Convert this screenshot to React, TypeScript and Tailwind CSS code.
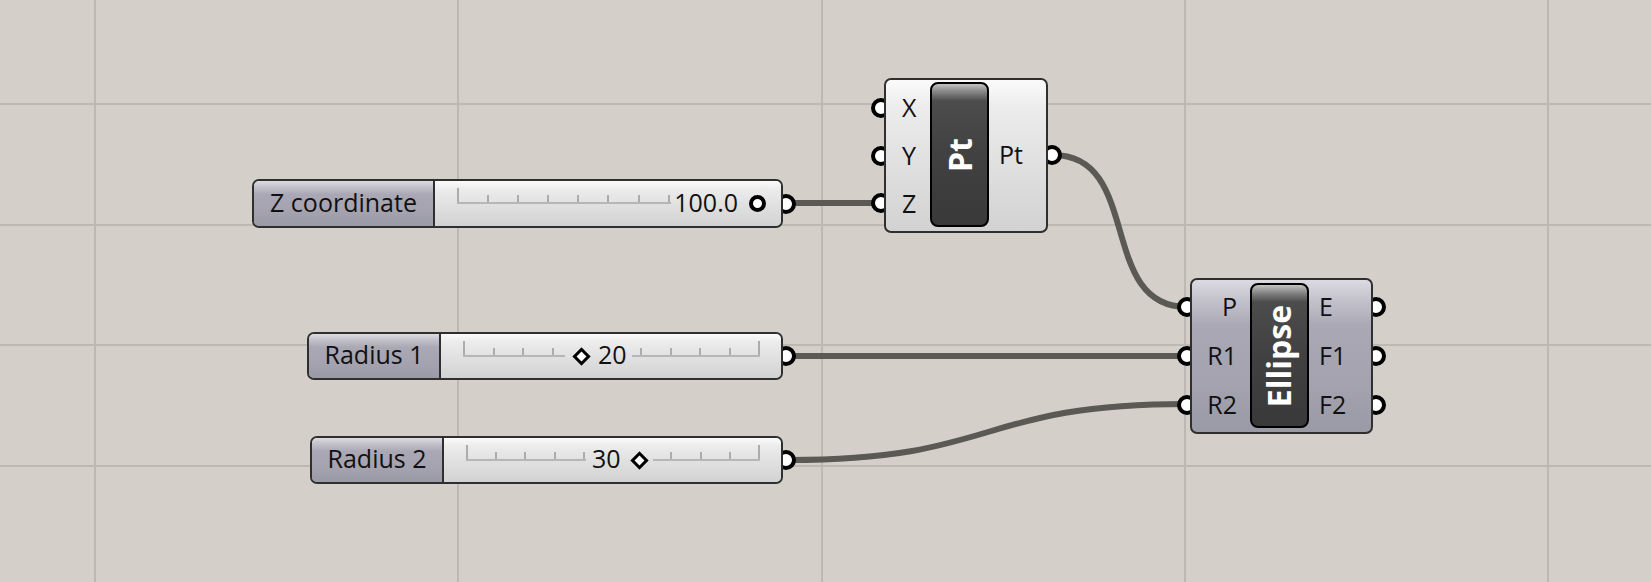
import React from 'react'

const font = "font-['Open_Sans',sans-serif]"

// lavender label / component body
const lavender =
  'bg-[linear-gradient(to_bottom,#dcdbe2_0%,#c2c1cb_14%,#a9a8b4_30%,#a3a2ae_70%,#9a99a6_100%)]'
// pale grey slider track / component body
const pale =
  'bg-[linear-gradient(to_bottom,#fbfbfb_0%,#ececec_18%,#e0e0e0_55%,#d2d2d2_100%)]'
const capsule =
  'bg-[linear-gradient(to_bottom,#c4c4c4_0%,#8a8a8a_5%,#4c4c4c_12%,#414141_50%,#393939_100%)]'

function Port({ className }: { className: string }) {
  return (
    <div
      className={`absolute w-[20px] h-[20px] rounded-full border-[4.5px] border-black bg-white ${className}`}
    />
  )
}

function Diamond() {
  return (
    <div className="w-[20px] h-[20px] flex items-center justify-center shrink-0">
      <div className="w-[13px] h-[13px] rotate-45 border-[3px] border-black bg-white" />
    </div>
  )
}

function Track() {
  const ticks = Array.from({ length: 11 })
  return (
    <div className="absolute left-[22px] right-[21px] top-[9px] h-[14px] border-b-2 border-[#b6b6b6] flex justify-between items-end">
      {ticks.map((_, i) => (
        <div
          key={i}
          className={`w-[2px] bg-[#acacac] ${i === 0 || i === 10 ? 'h-[14px]' : 'h-[7px]'}`}
        />
      ))}
    </div>
  )
}

function Slider({
  pos,
  labelW,
  label,
  children,
}: {
  pos: string
  labelW: string
  label: string
  children: React.ReactNode
}) {
  return (
    <div className={`absolute ${pos}`}>
      <Port className="right-[-13px] top-1/2 -translate-y-1/2" />
      <div className="relative flex h-full rounded-[7px] border-2 border-[#2f2f2f] overflow-hidden">
        <div
          className={`${labelW} ${lavender} border-r-2 border-[#2f2f2f] flex items-center justify-center text-[25px] text-[#111] pb-[2px]`}
        >
          {label}
        </div>
        <div className={`relative flex-1 ${pale}`}>
          <Track />
          {children}
        </div>
      </div>
    </div>
  )
}

function Capsule({ text }: { text: string }) {
  return (
    <div
      className={`w-[59px] h-full rounded-[8px] border-2 border-black ${capsule} flex items-center justify-center`}
    >
      <span className="-rotate-90 text-white font-bold text-[32px] leading-none whitespace-nowrap">
        {text}
      </span>
    </div>
  )
}

function Wires() {
  return (
    <svg className="absolute inset-0" width="1651" height="582">
      <g stroke="#5a5954" strokeWidth="6" fill="none">
        <path d="M 789 203 L 880 203" />
        <path d="M 1053 155 C 1143 155, 1097 307, 1187 307" />
        <path d="M 789 356 L 1187 356" />
        <path d="M 789 460 C 1000 460, 976 404, 1187 404" />
      </g>
    </svg>
  )
}

function Grid() {
  const xs = [95, 458, 822, 1185, 1548]
  const ys = [104, 225, 345, 466]
  return (
    <svg className="absolute inset-0" width="1651" height="582">
      <g stroke="#bdb9b2" strokeWidth="2">
        {xs.map((x) => (
          <line key={x} x1={x} y1={0} x2={x} y2={582} />
        ))}
        {ys.map((y) => (
          <line key={y} x1={0} y1={y} x2={1651} y2={y} />
        ))}
      </g>
    </svg>
  )
}

export default function App() {
  return (
    <div className={`relative w-[1651px] h-[582px] overflow-hidden bg-[#d4d0c9] ${font}`}>
      <Grid />
      <Wires />

      {/* sliders */}
      <Slider pos="left-[252px] top-[179px] w-[531px] h-[49px]" labelW="w-[181px]" label="Z coordinate">
        <div className={`absolute top-0 bottom-0 right-[15px] flex items-center gap-[11px] pl-[3px] ${pale}`}>
          <span className="text-[25px] text-[#111] pb-[2px]">100.0</span>
          <div className="w-[17px] h-[17px] rounded-full border-[4px] border-black bg-white" />
        </div>
      </Slider>

      <Slider pos="left-[307px] top-[332px] w-[476px] h-[48px]" labelW="w-[132px]" label="Radius 1">
        <div className={`absolute top-0 bottom-0 left-[124px] flex items-center gap-[7px] pl-[6px] pr-[5px] ${pale}`}>
          <Diamond />
          <span className="text-[25px] text-[#111] pb-[2px]">20</span>
        </div>
      </Slider>

      <Slider pos="left-[310px] top-[436px] w-[473px] h-[48px]" labelW="w-[132px]" label="Radius 2">
        <div className={`absolute top-0 bottom-0 left-[142px] flex items-center gap-[9px] pl-[6px] pr-[3px] ${pale}`}>
          <span className="text-[25px] text-[#111] pb-[2px]">30</span>
          <Diamond />
        </div>
      </Slider>

      {/* Pt component */}
      <div className="absolute left-[884px] top-[78px] w-[164px] h-[155px]">
        <Port className="left-[-13px] top-[20px]" />
        <Port className="left-[-13px] top-[68px]" />
        <Port className="left-[-13px] top-[115px]" />
        <Port className="right-[-14px] top-[67px]" />
        <div
          className={`relative flex h-full rounded-[7px] border-2 border-[#2f2f2f] ${pale} text-[25px] text-[#111]`}
        >
          <div className="w-[44px] flex flex-col justify-center pl-[16px]">
            <div className="h-[48px] flex items-center">X</div>
            <div className="h-[48px] flex items-center">Y</div>
            <div className="h-[48px] flex items-center">Z</div>
          </div>
          <div className="pt-[2px] pb-[4px]">
            <Capsule text="Pt" />
          </div>
          <div className="flex-1 flex items-center pl-[10px] pb-[2px]">Pt</div>
        </div>
      </div>

      {/* Ellipse component */}
      <div className="absolute left-[1190px] top-[278px] w-[183px] h-[156px]">
        <Port className="left-[-13px] top-[19px]" />
        <Port className="left-[-13px] top-[68px]" />
        <Port className="left-[-13px] top-[117px]" />
        <Port className="right-[-13px] top-[19px]" />
        <Port className="right-[-13px] top-[68px]" />
        <Port className="right-[-13px] top-[117px]" />
        <div
          className={`relative flex h-full rounded-[7px] border-2 border-[#2f2f2f] ${lavender} text-[25px] text-[#111]`}
        >
          <div className="w-[58px] flex flex-col justify-center items-end pr-[13px]">
            <div className="h-[49px] flex items-center">P</div>
            <div className="h-[49px] flex items-center">R1</div>
            <div className="h-[49px] flex items-center">R2</div>
          </div>
          <div className="pt-[3px] pb-[4px]">
            <Capsule text="Ellipse" />
          </div>
          <div className="flex-1 flex flex-col justify-center pl-[10px]">
            <div className="h-[49px] flex items-center">E</div>
            <div className="h-[49px] flex items-center">F1</div>
            <div className="h-[49px] flex items-center">F2</div>
          </div>
        </div>
      </div>
    </div>
  )
}
